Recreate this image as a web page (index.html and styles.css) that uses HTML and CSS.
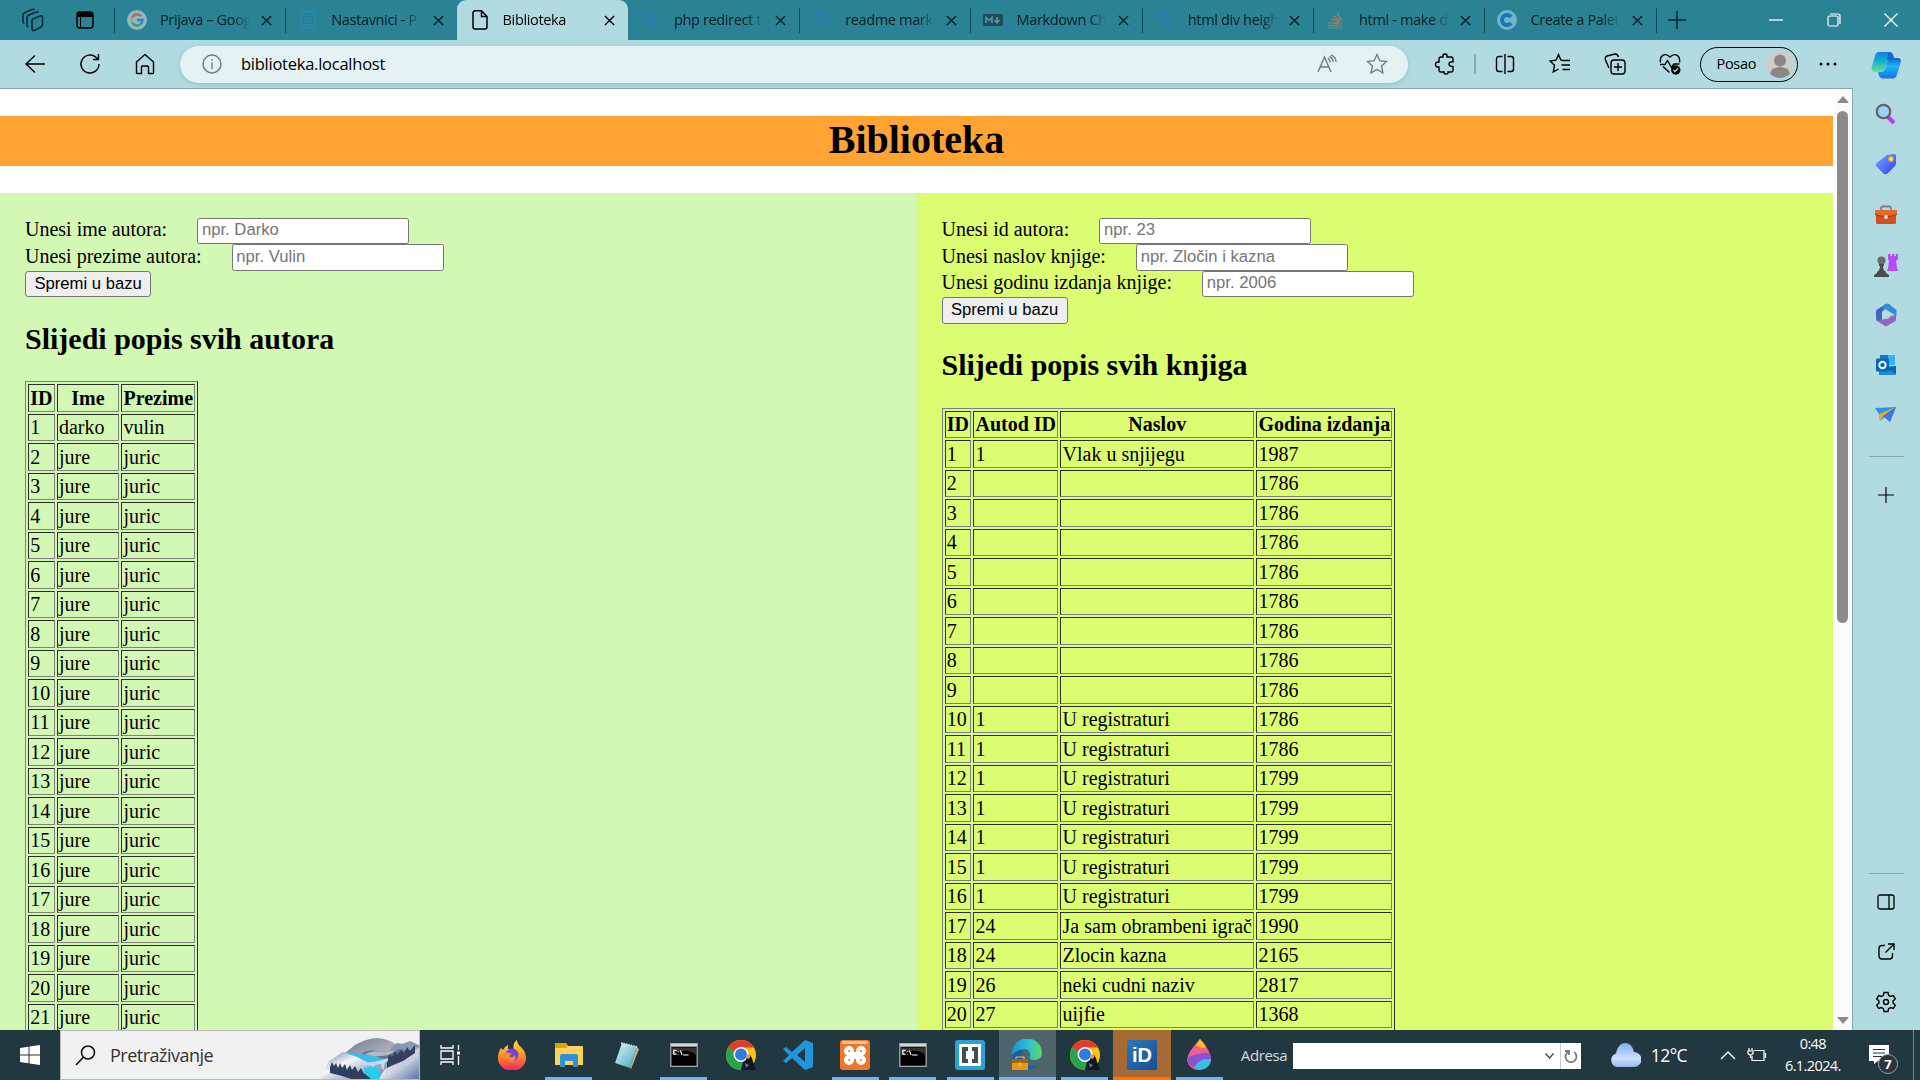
FILE: index.html
```html
<!DOCTYPE html>
<html lang="hr">
<head>
<meta charset="utf-8">
<title>Biblioteka</title>
<link rel="stylesheet" href="styles.css">
</head>
<body>
<svg class="defs" width="0" height="0">
  <defs>
    <linearGradient id="gFire" x1="0" y1="0" x2="0" y2="1"><stop offset="0" stop-color="#ffe03a"/><stop offset=".5" stop-color="#ff9025"/><stop offset="1" stop-color="#f0206a"/></linearGradient>
    <linearGradient id="gEdge" x1="0" y1="0" x2="1" y2="0"><stop offset="0" stop-color="#1b8fdc"/><stop offset=".6" stop-color="#2fc3cf"/><stop offset="1" stop-color="#5fdc5c"/></linearGradient>
    <linearGradient id="gCopA" x1="0" y1="0" x2="0" y2="1"><stop offset="0" stop-color="#0f7fe0"/><stop offset=".5" stop-color="#16b5d0"/><stop offset="1" stop-color="#6fe08a"/></linearGradient>
    <linearGradient id="gCopB" x1="0" y1="0" x2="0" y2="1"><stop offset="0" stop-color="#1560d0"/><stop offset=".4" stop-color="#21b5f2"/><stop offset="1" stop-color="#1671ea"/></linearGradient>
    <linearGradient id="gTag" x1="0" y1="0" x2="1" y2="1"><stop offset="0" stop-color="#7aa8ff"/><stop offset="1" stop-color="#2f3df0"/></linearGradient>
    <linearGradient id="gCloud" x1="0" y1="0" x2="0" y2="1"><stop offset="0" stop-color="#7db0f5"/><stop offset=".65" stop-color="#cfe0fb"/><stop offset="1" stop-color="#94b8ee"/></linearGradient>
    <linearGradient id="gRock" x1="0" y1="0" x2="1" y2="1"><stop offset="0" stop-color="#6c7690"/><stop offset=".5" stop-color="#b7b5c6"/><stop offset="1" stop-color="#4d5674"/></linearGradient>
    <linearGradient id="gSnow" x1="0" y1="0" x2="1" y2="1"><stop offset="0" stop-color="#5e7cab"/><stop offset=".4" stop-color="#f4f6fa"/><stop offset="1" stop-color="#5474a6"/></linearGradient>
    <linearGradient id="gNote" x1="0" y1="0" x2="1" y2="1"><stop offset="0" stop-color="#e4f7fa"/><stop offset="1" stop-color="#3fa3bd"/></linearGradient>
    <symbol id="x" viewBox="0 0 12 12"><path d="M1 1l10 10M11 1L1 11" fill="none" stroke="currentColor" stroke-width="1.5"/></symbol>
    <symbol id="lens" viewBox="0 0 20 20"><circle cx="8" cy="8" r="5" fill="none" stroke="#1f7fb8" stroke-width="2.2"/><path d="M12 12l5 5" stroke="#1f7fb8" stroke-width="2.4"/></symbol>
    <symbol id="cmd" viewBox="0 0 30 26"><rect x=".7" y=".7" width="28.6" height="24.6" fill="#000" stroke="#a5a9ab" stroke-width="1.4"/><path d="M1 1h28v3H1z" fill="#d5d8da"/><path d="M2 13C10 7 22 7 28 13V5H2z" fill="#333"/><path d="M7 8H4v4h3M9 9v1M9 12v.5M11 8l2 5M14 13h6" stroke="#fff" fill="none" stroke-width="1.3"/></symbol>
    <symbol id="chrome" viewBox="0 0 32 32"><circle cx="16" cy="16" r="15" fill="#fbc116"/><path d="M16 16L3 8.500A15 15 0 0 1 29 8.500H16z" fill="#e33b2e"/><path d="M3 8.500A15 15 0 0 0 16 31l6.500-11.300L16 16z" fill="#2ba24c"/><circle cx="16" cy="15.500" r="7.500" fill="#fff"/><circle cx="16" cy="15.500" r="6" fill="#2f7de1"/><path d="M16 31l2-8 3-2 1-4 3-1 2 3 1 4 3 8z" fill="#151720"/><circle cx="23" cy="17.500" r="2.300" fill="#c89a82"/><path d="M20 24l4 2-3 3z" fill="#6973a0"/></symbol>
  </defs>
</svg>

<header class="tabbar">
  <div class="tab-tools">
    <svg width="22" height="24" viewBox="0 0 22 24" fill="none" stroke="#062c35" stroke-width="1.600"><path d="M11 11l7-3q2.500-1 2.500 1.500v7q0 1.800-1.500 2.500l-6 3.300q-3 1.200-3-1.800v-7.500q0-1.500 1-2z"/><path d="M6.500 19Q5 18.500 5 17V9.500q0-1.500 1.500-2.300L14 4q1.500-.5 2.500.5M2.500 15.500Q1 15 1 13.500V7q0-1.500 1.500-2.300L10 1.500q1.500-.5 2.500.5"/></svg>
    <svg width="18" height="18" viewBox="0 0 18 18"><rect x="1" y="1" width="16" height="16" rx="3" fill="none" stroke="#000" stroke-width="1.500"/><path d="M1 1h16v5H1z"/><path d="M4.500 6v10" stroke="#000"/></svg>
  </div>
  <nav class="tabs">
    <div class="tab"><svg class="fav" viewBox="0 0 20 20"><circle cx="10" cy="10" r="10" fill="#8fb9c2"/><path d="M14 6a5.500 5.500 0 0 0-9 2" stroke="#b5686c" stroke-width="2.500" fill="none"/><path d="M5 7.500a6 6 0 0 0 0 5" stroke="#b6a463" stroke-width="2.500" fill="none"/><path d="M5 12.500a5.500 5.500 0 0 0 8 2" stroke="#3f9a74" stroke-width="2.500" fill="none"/><path d="M10 10h5.500q0 3-2 4.500" stroke="#3f7fc0" stroke-width="2.500" fill="none"/></svg><span>Prijava – Goog</span><svg class="x"><use href="#x"/></svg></div>
    <div class="tab"><svg class="fav" viewBox="0 0 20 20"><path d="M3 1h14v15H3zM1 17h18v2H1z" fill="#2589a9"/><path d="M4 4h12M4 7h12M4 10h12M4 13h12" stroke="#2b718b"/></svg><span>Nastavnici - P</span><svg class="x"><use href="#x"/></svg></div>
    <div class="tab active"><svg class="fav" viewBox="0 0 20 20" fill="none" stroke="#000" stroke-width="1.500"><path d="M4 .8h7.500L17 6.500V17q0 2-2 2H5q-2 0-2-2V3q0-2 2-2M11.500 1v5.500H17"/></svg><span>Biblioteka</span><svg class="x"><use href="#x"/></svg></div>
    <div class="tab"><svg class="fav" viewBox="0 0 20 20"><use href="#lens"/></svg><span>php redirect t</span><svg class="x"><use href="#x"/></svg></div>
    <div class="tab"><svg class="fav" viewBox="0 0 20 20"><use href="#lens"/></svg><span>readme markd</span><svg class="x"><use href="#x"/></svg></div>
    <div class="tab"><svg class="fav" viewBox="0 0 20 20"><rect y="4" width="20" height="12" rx="1" fill="#1f4c58"/><path d="M3 13V7.500l3 3 3-3V13M14 7v5M11.500 10l2.500 3 2.500-3" stroke="#4f97a6" stroke-width="1.700" fill="none"/></svg><span>Markdown Ch</span><svg class="x"><use href="#x"/></svg></div>
    <div class="tab"><svg class="fav" viewBox="0 0 20 20"><use href="#lens"/></svg><span>html div heigh</span><svg class="x"><use href="#x"/></svg></div>
    <div class="tab"><svg class="fav" viewBox="0 0 20 20" fill="none"><path d="M3 12v6h12v-6" stroke="#588b8e" stroke-width="1.500"/><path d="M5 15.500h8M5 12.500l8 1M6 9l7 3M8 6l6 5M11 3l4 7" stroke="#a07f58" stroke-width="1.500"/></svg><span>html - make d</span><svg class="x"><use href="#x"/></svg></div>
    <div class="tab"><svg class="fav" viewBox="0 0 20 20"><circle cx="10" cy="10" r="10" fill="#75b5c6"/><path d="M14 7a5 5 0 1 0 0 6" stroke="#1478bd" stroke-width="4" fill="none"/></svg><span>Create a Palet</span><svg class="x"><use href="#x"/></svg></div>
  </nav>
  <div class="newtab"><svg width="18" height="18" viewBox="0 0 18 18"><path d="M9 0v18M0 9h18" stroke="#04262d" stroke-width="1.500"/></svg></div>
  <div class="win">
    <svg width="14" height="14" viewBox="0 0 14 14"><path d="M0 7h14" stroke="#fff" stroke-width="1.300"/></svg>
    <svg width="14" height="14" viewBox="0 0 14 14" fill="none" stroke="#fff" stroke-width="1.200"><rect x="1" y="3" width="10" height="10" rx="1.500"/><path d="M3 1h8q2 0 2 2v8"/></svg>
    <svg width="14" height="14" viewBox="0 0 14 14"><path d="M.5.5l13 13M13.500.5l-13 13" stroke="#fff" stroke-width="1.300"/></svg>
  </div>
</header>

<div class="browser">
  <div class="main">
    <div class="toolbar">
      <div class="tb"><svg width="22" height="20" viewBox="0 0 22 20"><path d="M11 1.500L2 10l9 8.500M2 10h19"/></svg></div>
      <div class="tb"><svg width="22" height="22" viewBox="0 0 22 22"><path d="M20 11a9 9 0 1 1-3-6.700L19.500 6.500M19.500 1v5.500H14"/></svg></div>
      <div class="tb"><svg width="20" height="22" viewBox="0 0 20 22"><path d="M1.500 9L10 1.500 18.500 9v10.500q0 1-1 1h-4V14q0-1-1-1h-5q-1 0-1 1v6.500h-4q-1 0-1-1z"/></svg></div>
      <div class="address">
        <svg width="20" height="20" viewBox="0 0 20 20"><circle cx="10" cy="10" r="9"/><path d="M10 8.500V15M10 5v1.800"/></svg>
        <span>biblioteka.localhost</span>
        <svg width="20" height="20" viewBox="0 0 20 20"><path d="M1 18L7.500 3 14 18M3.500 13h8M11 4q2 1.500 2 4.500M12.500 2.500q3.500 1.500 3.500 5.500M14 .8q5 2 5 7"/></svg>
        <svg class="star" width="22" height="22" viewBox="0 0 22 22"><path d="M11 1.500l2.900 6.200 6.600.8-4.900 4.600 1.300 6.700L11 16.500l-5.900 3.300 1.300-6.700L1.500 8.500l6.600-.8z"/></svg>
      </div>
      <div class="tb"><svg width="22" height="22" viewBox="0 0 22 22"><path d="M7 4h2q-.5-3 2-3t2 3h4q2 0 2 2v3q-4-.5-4 2t4 2.500V17q0 2-2 2h-3q.5 2-2 2t-2-2H7q-2 0-2-2v-3q-3.500.5-3.500-2.500T5 9V6q0-2 2-2z"/></svg></div>
      <i class="tb-sep"></i>
      <div class="tb"><svg width="20" height="22" viewBox="0 0 20 22"><path d="M7.500 3.500H4q-2.500 0-2.500 2.500v10q0 2.500 2.500 2.500h3.500M12.500 3.500H16q2.500 0 2.500 2.500v10q0 2.500-2.500 2.500h-3.500M10 1v20"/></svg></div>
      <div class="tb"><svg width="22" height="22" viewBox="0 0 22 22"><path d="M14 7.500l-2-.3L9.500 1.500 7 7.200l-6 .8 4.500 4.200L4.300 19l5.200-3M14 7.500h7M12.500 12H21M13.500 16.500H21"/></svg></div>
      <div class="tb"><svg width="22" height="22" viewBox="0 0 22 22"><rect x="7" y="7" width="14" height="14" rx="3"/><path d="M14 10v8M10 14h8M5 15L1.300 6.500Q.8 4 3 3l8-2q2.500-.3 3.500 3"/></svg></div>
      <div class="tb"><svg width="22" height="22" viewBox="0 0 22 22"><path d="M1.600 9.500C0 3 6-1 11 4 16-1 22 3 20.400 9.500M1 11.500h5l2.500-4 4 7 2.500-3.500h5.500M4 13.500l6.500 6"/><circle cx="16.800" cy="17" r="4.700" fill="#000" stroke="none"/><path d="M14.500 17l1.500 1.500 3-3" stroke="#b2dae1"/></svg></div>
      <div class="profile"><span>Posao</span><svg width="28" height="28" viewBox="0 0 28 28"><circle cx="14" cy="14" r="13.800" fill="#d0cecb"/><circle cx="14" cy="10.500" r="6" fill="#8a8886"/><path d="M4 24q1-7 10-7t10 7q-10 8-20 0z" fill="#8a8886"/></svg></div>
      <div class="tb more"><svg width="18" height="4" viewBox="0 0 18 4" fill="#000"><circle cx="2" cy="2" r="1.500" fill="#000"/><circle cx="9" cy="2" r="1.500" fill="#000"/><circle cx="16" cy="2" r="1.500" fill="#000"/></svg></div>
    </div>
    <div class="viewport">
      <div class="page">
        <h1>Biblioteka</h1>
        <div class="cols">
          <section class="authors">
            <form>
              <div class="row"><label>Unesi ime autora:</label><input type="text" placeholder="npr. Darko"></div>
              <div class="row"><label>Unesi prezime autora:</label><input type="text" placeholder="npr. Vulin"></div>
              <div class="row"><button type="button">Spremi u bazu</button></div>
            </form>
            <h2>Slijedi popis svih autora</h2>
            <table border="1">
              <tr><th>ID</th><th class="c-ime">Ime</th><th>Prezime</th></tr>
              <tr><td>1</td><td>darko</td><td>vulin</td></tr>
              <tr><td>2</td><td>jure</td><td>juric</td></tr>
              <tr><td>3</td><td>jure</td><td>juric</td></tr>
              <tr><td>4</td><td>jure</td><td>juric</td></tr>
              <tr><td>5</td><td>jure</td><td>juric</td></tr>
              <tr><td>6</td><td>jure</td><td>juric</td></tr>
              <tr><td>7</td><td>jure</td><td>juric</td></tr>
              <tr><td>8</td><td>jure</td><td>juric</td></tr>
              <tr><td>9</td><td>jure</td><td>juric</td></tr>
              <tr><td>10</td><td>jure</td><td>juric</td></tr>
              <tr><td>11</td><td>jure</td><td>juric</td></tr>
              <tr><td>12</td><td>jure</td><td>juric</td></tr>
              <tr><td>13</td><td>jure</td><td>juric</td></tr>
              <tr><td>14</td><td>jure</td><td>juric</td></tr>
              <tr><td>15</td><td>jure</td><td>juric</td></tr>
              <tr><td>16</td><td>jure</td><td>juric</td></tr>
              <tr><td>17</td><td>jure</td><td>juric</td></tr>
              <tr><td>18</td><td>jure</td><td>juric</td></tr>
              <tr><td>19</td><td>jure</td><td>juric</td></tr>
              <tr><td>20</td><td>jure</td><td>juric</td></tr>
              <tr><td>21</td><td>jure</td><td>juric</td></tr>
            </table>
          </section>
          <section class="books">
            <form>
              <div class="row"><label>Unesi id autora:</label><input type="text" placeholder="npr. 23"></div>
              <div class="row"><label>Unesi naslov knjige:</label><input type="text" placeholder="npr. Zločin i kazna"></div>
              <div class="row"><label>Unesi godinu izdanja knjige:</label><input type="text" placeholder="npr. 2006"></div>
              <div class="row"><button type="button">Spremi u bazu</button></div>
            </form>
            <h2>Slijedi popis svih knjiga</h2>
            <table border="1">
              <tr><th>ID</th><th>Autod ID</th><th>Naslov</th><th>Godina izdanja</th></tr>
              <tr><td>1</td><td>1</td><td>Vlak u snjijegu</td><td>1987</td></tr>
              <tr><td>2</td><td></td><td></td><td>1786</td></tr>
              <tr><td>3</td><td></td><td></td><td>1786</td></tr>
              <tr><td>4</td><td></td><td></td><td>1786</td></tr>
              <tr><td>5</td><td></td><td></td><td>1786</td></tr>
              <tr><td>6</td><td></td><td></td><td>1786</td></tr>
              <tr><td>7</td><td></td><td></td><td>1786</td></tr>
              <tr><td>8</td><td></td><td></td><td>1786</td></tr>
              <tr><td>9</td><td></td><td></td><td>1786</td></tr>
              <tr><td>10</td><td>1</td><td>U registraturi</td><td>1786</td></tr>
              <tr><td>11</td><td>1</td><td>U registraturi</td><td>1786</td></tr>
              <tr><td>12</td><td>1</td><td>U registraturi</td><td>1799</td></tr>
              <tr><td>13</td><td>1</td><td>U registraturi</td><td>1799</td></tr>
              <tr><td>14</td><td>1</td><td>U registraturi</td><td>1799</td></tr>
              <tr><td>15</td><td>1</td><td>U registraturi</td><td>1799</td></tr>
              <tr><td>16</td><td>1</td><td>U registraturi</td><td>1799</td></tr>
              <tr><td>17</td><td>24</td><td>Ja sam obrambeni igrač</td><td>1990</td></tr>
              <tr><td>18</td><td>24</td><td>Zlocin kazna</td><td>2165</td></tr>
              <tr><td>19</td><td>26</td><td>neki cudni naziv</td><td>2817</td></tr>
              <tr><td>20</td><td>27</td><td>uijfie</td><td>1368</td></tr>
              <tr><td></td><td></td><td></td><td></td></tr>
            </table>
          </section>
        </div>
      </div>
      <div class="scroll">
        <svg width="12" height="7" viewBox="0 0 12 7"><path d="M6 0l6 7H0z" fill="#8b8b8b"/></svg>
        <i class="thumb"></i>
        <svg class="down" width="12" height="7" viewBox="0 0 12 7"><path d="M6 7l6-7H0z" fill="#8b8b8b"/></svg>
      </div>
    </div>
  </div>
  <aside class="side">
    <div class="si"><svg width="30" height="28" viewBox="0 0 30 28"><path d="M8 1h10q3 0 4 3l1.500 5H17l-3.500 9q-1 3-4 3H3Q-.5 20 1 15L4 5q1-4 4-4z" fill="url(#gCopA)"/><path d="M17 1h1q3 0 4 3l1.500 5H16z" fill="#1467d2"/><path d="M22 27.500H12q-3 0-4-3L7 21h3q3 0 4-3l2.500-8q1-3 4-3H27q4 0 2.500 5L26 23.500q-1 4-4 4z" fill="url(#gCopB)"/></svg></div>
    <div class="si"><svg width="22" height="22" viewBox="0 0 22 22"><path d="M13 14l6 6" stroke="#c835f5" stroke-width="4"/><circle cx="8.500" cy="8.500" r="6.700" fill="#95d4f0" stroke="#626468" stroke-width="2.300"/></svg></div>
    <div class="si"><svg width="22" height="22" viewBox="0 0 22 22"><path d="M12 2l7-1q2 0 2 2v7q0 2-1.500 3.500l-7 7q-2 1.500-4 0l-7-7q-1.500-2 0-3.500z" fill="url(#gTag)"/><circle cx="16" cy="6" r="2.300" fill="#ffe98a" stroke="#e3ad16" stroke-width="1.300"/></svg></div>
    <div class="si"><svg width="24" height="20" viewBox="0 0 24 20"><path d="M7 6V3q0-1.500 1.500-1.500h7Q17 1.500 17 3v3" fill="none" stroke="#7d8487" stroke-width="1.800"/><rect x="2" y="7" width="20" height="12" rx="1.500" fill="#d2501d"/><path d="M1 5h22v5q-11 3-22 0z" fill="#e8692a"/><path d="M1 9.500q11 4 22 0" stroke="#9b3410" fill="none"/><circle cx="12" cy="12" r="2" fill="#d8d8d8"/></svg></div>
    <div class="si"><svg width="24" height="24" viewBox="0 0 24 24"><path d="M14 1h2.500v2H18V1h2.500v2H22V1h2v5l-2 2 1 7 1 3H13l1-3 1-7-1-2z" fill="#b64df5"/><circle cx="7.500" cy="7.500" r="4" fill="#6b6b6b"/><path d="M5 11h5v2h-1q0 4 3 6v1l3 2v2H0v-2l3-2v-1q3-2 3-6H5z" fill="#4d4d4d"/></svg></div>
    <div class="si"><svg width="22" height="24" viewBox="0 0 22 24"><path d="M11 1L2 6.500q-1 .7-1 2v7q0 1.500 1 2.500l5 1V9l8-8z" fill="#4564c8"/><path d="M10 1l3-.5 8 6q.5 1 .5 2V13L15 9l-8-5z" fill="#348ed4"/><path d="M21 11.500v5q0 1-1 1.700L12 23q-1 .5-2 0l-8-5q-1-1-1-2.500 3 3 6 1.500l8-3.500z" fill="#9266c4"/><circle cx="11" cy="12" r="4" fill="#b2dae1"/></svg></div>
    <div class="si"><svg width="22" height="22" viewBox="0 0 22 22"><path d="M5 1h15v10H5z" fill="#32b6ec"/><path d="M5 1h8v5H5z" fill="#1779c4"/><path d="M4 12h17v8q0 1-1 1H4z" fill="#1b8ad8"/><path d="M21 12v8L11 14z" fill="#1266ab"/><rect x="1" y="4.500" width="13" height="13" rx="1.200" fill="#0868bd"/><circle cx="7.500" cy="11" r="3.200" fill="none" stroke="#fff" stroke-width="1.900"/></svg></div>
    <div class="si"><svg width="24" height="18" viewBox="0 0 24 18"><path d="M1 2l21-1-6 15-5-5-5 4-1-7z" fill="#2b94ea"/><path d="M22 1L5 8l1 7 3-5z" fill="#f5a81c"/><path d="M22 1L9 10l7 6z" fill="#3a79df"/></svg></div>
    <i class="rule"></i>
    <div class="si plus"><svg width="16" height="16" viewBox="0 0 16 16"><path d="M8 0v16M0 8h16" stroke="#000" stroke-width="1.200"/></svg></div>
    <div class="bottom">
      <i class="rule"></i>
      <div class="si"><svg width="18" height="16" viewBox="0 0 18 16" fill="none" stroke="#000" stroke-width="1.300"><rect x="1" y="1" width="16" height="14" rx="2"/><path d="M12 1v14"/></svg></div>
      <div class="si"><svg width="17" height="17" viewBox="0 0 17 17" fill="none" stroke="#000" stroke-width="1.400"><path d="M7 2.500H4q-3 0-3 3V13q0 3 3 3h7.500q3 0 3-3v-3M7.500 9.500L16 1M10 1h6v6"/></svg></div>
      <div class="si"><svg width="22" height="22" viewBox="0 0 22 22" fill="none" stroke="#000" stroke-width="1.400"><path d="M9 1.500h4l.6 2.800 2 1.100 2.700-.9 2 3.400-2.200 2v2.200l2.200 2-2 3.400-2.700-.9-2 1.100-.6 2.800H9l-.6-2.800-2-1.100-2.700.9-2-3.400 2.200-2V9.900l-2.200-2 2-3.400 2.700.9 2-1.100z"/><circle cx="11" cy="11" r="2.500"/></svg></div>
    </div>
  </aside>
</div>

<footer class="taskbar">
  <div class="start"><svg width="20" height="20" viewBox="0 0 20 20" fill="#fff"><path d="M0 3l8.500-1.200v7.700H0zM9.500 1.600L20 0v9.500H9.500zM0 10.500h8.500v7.700L0 17zM9.500 10.500H20V20L9.500 18.400z"/></svg></div>
  <div class="search">
    <svg class="sicon" width="21" height="21" viewBox="0 0 21 21" fill="none" stroke="#111" stroke-width="1.600"><circle cx="13" cy="7.500" r="6.500"/><path d="M8.500 12L1 20"/></svg>
    <span>Pretraživanje</span>
    <svg class="art" width="98" height="41" viewBox="0 0 98 41">
      <path d="M24 15l10-8q10-6 22-7 12 1 20 7l12-3 10 4v33H22z" fill="url(#gRock)"/>
      <path d="M70 9l6-4 6 1 7-3 9 4v34H66z" fill="#8797b4"/>
      <path d="M40 16q8-6 20-2l20-3 8 3-16 10-22-2z" fill="#666f8b"/>
      <path d="M44 16q8-4 16-2 10-1 16-2l-8 5-16 2z" fill="#b5b8c8"/>
      <path d="M26 14l22 3 16 4 3 5-14 2-24-6z" fill="#35bfe8"/>
      <path d="M0 41l8-18 14-9 14 5 16 8 8 14z" fill="url(#gSnow)"/>
      <path d="M58 41q4-10 16-17l24-14v31z" fill="url(#gSnow)"/>
      <path d="M98 9v10l-12 8-16 5-6 5 2-9z" fill="#c4cfdf" opacity=".7"/>
      <path d="M9 29l2-5 2 4 2-3 2 5 2-5 2 5 3-4 2 6 3-5 2 5 3-4 3 6 3-4 3 6 3-3 3 6v6l-12-2-16-5-12-3z" fill="#2f3d5f"/>
      <path d="M66 21l3-5 2 3 3-6 2 4 4-5 3 3 3-6 3 4 5-6v8l-12 8-12 5-4 2z" fill="#33415f"/>
      <path d="M38 25q16 0 29-5v3l-3 2-2 8-2-7-6 1-2 4-2-4-10 0z" fill="#c9d8ee"/>
      <path d="M43 30q8-3 14 0l3 6-2 5H50l-6-5z" fill="#25cdee"/>
    </svg>
  </div>
  <div class="taskview"><svg width="20" height="20" viewBox="0 0 20 20" fill="none" stroke="#fff" stroke-width="1.300"><path d="M1 0v3h12V0M1 20v-3h12v3M1 6h12v8H1zM18.500 0v5M18.500 11v9"/><path d="M17 6.500h3v3h-3z" fill="#fff" stroke="none"/></svg></div>
  <div class="apps">
    <div class="app"><svg width="30" height="30" viewBox="0 0 30 30"><path d="M4 8l2 2q2-4 5-5v4q4 0 6 1-2-6 3-10 0 4 4 7 5 5 5 11A14 13 0 0 1 1 18Q1 12 4 8z" fill="url(#gFire)"/><circle cx="15" cy="15" r="6.500" fill="#7542d8"/><path d="M7 14q4-3 8 0-3 1-2 3 3 1 5-2 2 7-5 7-6-1-6-8z" fill="#ff8a22"/></svg></div>
    <div class="app run"><svg width="30" height="26" viewBox="0 0 30 26"><path d="M1 2q0-1 1-1h10l2 3h14q1 0 1 1v18H1z" fill="#ffd35a"/><path d="M1 1h11l2 3-2 2H1z" fill="#e0a10f"/><path d="M6 25V14q0-2 2-2h14q2 0 2 2v11h-5v-6h-8v6z" fill="#2f8fd8"/></svg></div>
    <div class="app"><svg width="30" height="30" viewBox="0 0 30 30"><path d="M11 3l15 4-7 21-15-5z" fill="url(#gNote)"/><path d="M26 7l2 2-8 20-1-1z" fill="#c8b087"/><path d="M10 3l16 4" stroke="#ddd" stroke-width="2" stroke-dasharray="1.500 1"/></svg></div>
    <div class="app run"><svg width="28" height="24"><use href="#cmd"/></svg></div>
    <div class="app"><svg width="32" height="32"><use href="#chrome"/></svg></div>
    <div class="app"><svg width="30" height="30" viewBox="0 0 30 30"><path d="M22 0l8 3v24l-8 3L9 18l-6 5-3-2 6-6-6-6 3-2 6 5zM22 8l-8 7 8 7z" fill="#2196dc" fill-rule="evenodd"/></svg></div>
    <div class="app run"><svg width="30" height="30" viewBox="0 0 30 30"><rect width="30" height="30" rx="3" fill="#f0762a"/><path d="M2 1h26v3H2z" fill="#f9c09a"/><path d="M9 11l12 9M21 11L9 20" fill="none" stroke="#fff" stroke-width="5"/><g fill="#f0762a" stroke="#fff" stroke-width="4"><circle cx="9" cy="11" r="3"/><circle cx="21" cy="11" r="3"/><circle cx="9" cy="20" r="3"/><circle cx="21" cy="20" r="3"/></g></svg></div>
    <div class="app run"><svg width="28" height="24"><use href="#cmd"/></svg></div>
    <div class="app run"><svg width="30" height="30" viewBox="0 0 30 30"><rect width="30" height="30" rx="3" fill="#2da2da"/><rect x="4" y="4" width="22" height="22" rx="1" fill="#fff"/><path d="M13 7H7v16h6v-4h-2v-8h2zM17 7h6v16h-6v-4h2v-8h-2z" fill="#474c50"/></svg></div>
    <div class="app run current"><svg width="32" height="32" viewBox="0 0 32 32"><path d="M1 16A15 15 0 0 1 31 13q0 8-8 8-5 0-4-3 1-7-5-8-8 0-13 6z" fill="url(#gEdge)"/><path d="M1 17q4-7 11-5-4 12 8 15 5 1 8-2Q21 33 12 30 1 27 1 17z" fill="#155fa8"/><path d="M1 20h16v11H1z" fill="#e89518"/><path d="M1 20h16v4H1z" fill="#a96209"/><path d="M5 20v-2h8v2M8 24h2v3H8z" fill="none" stroke="#f8c855"/></svg></div>
    <div class="app run"><svg width="32" height="32"><use href="#chrome"/></svg></div>
    <div class="app run alert"><div class="id-logo">iD</div></div>
    <div class="app run"><svg width="24" height="32" viewBox="0 0 24 32"><path d="M13 0q11 12 11 20a12 11 0 0 1-24 0Q1 13 13 0z" fill="#ef5f8f"/><path d="M13 0q4 4 6 8-5 3-10-2z" fill="#ffbc27"/><path d="M0 19q10-5 22-5 3 6 2 8-8-5-17 6Q1 26 0 19z" fill="#8951d6"/><path d="M7 29q4-10 17-9-1 11-13 11z" fill="#35bfe4"/></svg></div>
  </div>
  <label class="addr-label">Adresa</label>
  <div class="addr-box">
    <svg width="9" height="6" viewBox="0 0 9 6"><path d="M.5.5l4 4.500 4-4.500" fill="none" stroke="#444" stroke-width="1.300"/></svg>
    <div class="go"><svg width="14" height="15" viewBox="0 0 14 15"><path d="M10 3a5.500 5.500 0 1 1-6 0M1 2h4v4" fill="none" stroke="#777" stroke-width="1.800"/></svg></div>
  </div>
  <div class="weather"><svg width="31" height="24" viewBox="0 0 31 24"><path d="M7 24a7 7 0 0 1-1-13.500Q8 0 15 0t9 9a7.500 7.500 0 0 1 0 15z" fill="url(#gCloud)"/></svg><span>12°C</span></div>
  <div class="tray">
    <svg width="16" height="9" viewBox="0 0 16 9"><path d="M1 8l7-7 7 7" fill="none" stroke="#fff" stroke-width="1.400"/></svg>
    <svg width="20" height="14" viewBox="0 0 20 14" fill="none" stroke="#fff" stroke-width="1.200"><path d="M7 2.500h10v10H5V8M18.500 5v5M1 3h5v2.500q-2.500 3-5 0zM2 0v3M5 0v3M3.500 7v3"/></svg>
  </div>
  <div class="clock"><span>0:48</span><span>6.1.2024.</span></div>
  <div class="notif"><svg width="20" height="20" viewBox="0 0 20 20"><path d="M0 0h20v16H9l-4 3v-3H0z" fill="#fff"/><path d="M4 4.500h12M4 8h12M4 11.500h12" stroke="#213840" stroke-width="1.200"/></svg><b>7</b></div>
</footer>
</body>
</html>
```
FILE: styles.css
```css
* { box-sizing: border-box; }
body {
  margin: 0; width: 1920px; height: 1080px; overflow: hidden;
  display: flex; flex-direction: column;
  font-family: "Open Sans", "Noto Sans", sans-serif; color: #000;
}
.defs { position: absolute; }
svg { display: block; flex: none; }

/* tab strip */
.tabbar { height: 40px; background: #2c8295; display: flex; align-items: center; flex: none; }
.tab-tools { width: 114px; padding-left: 22px; display: flex; gap: 32px; align-items: center; }
.tabs { display: flex; height: 40px; }
.tab {
  width: 171.300px; height: 40px; padding: 0 12px 0 13px; display: flex; align-items: center;
  font-size: 14.500px; letter-spacing: -.35px; color: #031d23;
  background: linear-gradient(#124956, #124956) left 8px / 1px 25px no-repeat;
}
.tab .fav { width: 20px; height: 20px; margin-right: 13px; }
.tab span {
  width: 96px; overflow: hidden; white-space: nowrap; line-height: 24px;
  -webkit-mask-image: linear-gradient(to right, #000 72px, transparent 91px);
}
.tab .x { width: 11px; height: 11px; margin: 1px 1px 0 auto; }
.tab.active { background: #b2dae1; border-radius: 9px 9px 0 0; color: #000; }
.tab.active + .tab { background: none; }
.newtab { height: 40px; width: 45px; padding-left: 12px; display: flex; align-items: center; background: linear-gradient(#124956, #124956) left 8px / 1px 25px no-repeat; }
.win { margin-left: auto; display: flex; gap: 43.500px; padding-right: 22px; }

/* browser frame */
.browser { flex: 1; min-height: 0; display: flex; background: #b2dae1; }
.main { width: 1853px; display: flex; flex-direction: column; }
.toolbar { height: 48px; flex: none; display: flex; align-items: center; padding-left: 7.500px; }
.toolbar svg { fill: none; stroke: #000; stroke-width: 1.400; }
.tb { width: 55px; display: flex; justify-content: center; flex: none; }
.tb-sep { width: 2px; height: 20px; background: #86a9b1; margin: 0 1.500px; flex: none; }
.address {
  width: 1228px; height: 37px; margin: 0 9.500px 0 7.500px; border-radius: 19px; background: #e4f2f4;
  box-shadow: 0 1px 4px rgba(60, 140, 155, .3);
  display: flex; align-items: center; padding: 0 20px 0 22px; flex: none;
}
.address svg { stroke: #6d7c80; }
.address span { margin: -2px auto 0 19px; font-size: 16.500px; letter-spacing: -.25px; }
.address .star { margin-left: 29px; }
.profile {
  width: 98px; height: 35px; margin: 0 3px 0 2px; border: 1.500px solid #000; border-radius: 18px; flex: none;
  display: flex; align-items: center; justify-content: space-between; padding: 0 3px 0 16px;
  font-size: 14.500px; letter-spacing: -.3px;
}
.profile span { margin-top: -1px; }
.profile svg, .more svg { stroke: none; }
.viewport { flex: 1; min-height: 0; display: flex; border-top: 1px solid #87a6ad; border-right: 1px solid #87a6ad; background: #fff; }

/* page content, shown at 125% */
.page {
  width: 1466.400px; height: 752.800px; zoom: 1.25; overflow: hidden; flex: none;
  font-family: "Liberation Serif", "Times New Roman", serif; font-size: 16px;
  display: flex; flex-direction: column;
}
.page h1 { font-size: 32px; height: 40px; line-height: 38.400px; margin: 21.600px 0; background: #ffa433; text-align: center; flex: none; }
.cols { display: grid; grid-template-columns: 1fr 1fr; }
.cols section { padding: 19.600px 20px 20px; }
.authors { background: #d3f8b4; }
.books { background: #dcfc72; }
.row { height: 21.200px; display: flex; align-items: center; }
.row label { margin-right: 24px; line-height: 18px; margin-top: -2.400px; }
.row input {
  width: 169.600px; height: 21.200px; padding: 0 2px 1px 3px; border: 1px solid #767676; border-radius: 2px; margin: 0;
  font: 13.333px "Liberation Sans", Arial, sans-serif; background: #fff;
}
.row input::placeholder { color: #757575; }
.row button {
  width: 101px; height: 21.200px; padding: 0; border: 1px solid #767676; border-radius: 2.500px; background: #efefef; color: #000;
  font: 13.333px "Liberation Sans", Arial, sans-serif; white-space: nowrap;
}
.page h2 { font-size: 24px; line-height: 27px; margin: 19.920px 0 20.300px; }
.page table { border: 1px outset #808080; border-spacing: 2px; }
.page th, .page td { padding: 1px; height: 22px; line-height: 18px; border: 1px inset #808080; }
.page .c-ime { width: 50px; }

.scroll { width: 19px; background: #fcfcfc; display: flex; flex-direction: column; align-items: center; padding: 7px 0 6px; }
.thumb { width: 11px; height: 512px; margin-top: 8px; background: #8b8b8b; border-radius: 6px; }
.scroll .down { margin-top: auto; }

/* right side bar */
.side { width: 67px; display: flex; flex-direction: column; align-items: center; padding-right: 1px; }
.si { height: 50.200px; display: flex; align-items: center; justify-content: center; flex: none; }
.side > .si:first-child { height: 49.200px; }
.rule { width: 35px; height: 1px; background: #86a9b1; margin-top: 15px; }
.plus { margin-top: 13px; }
.bottom { margin-top: auto; padding-bottom: 3px; display: flex; flex-direction: column; align-items: center; }
.bottom .rule { margin: 0 0 2px; }

/* taskbar */
.taskbar { height: 50px; flex: none; background: #213840; color: #fff; display: flex; align-items: center; }
.start { width: 60px; display: flex; justify-content: center; }
.search { width: 360px; height: 50px; background: #f1f1f1; border: 1px solid #b7babb; display: flex; align-items: center; padding-left: 14px; color: #333; }
.search span { margin: 0 auto 0 14px; font-size: 18px; letter-spacing: -.5px; }
.search .art { align-self: flex-end; }
.taskview { width: 59px; display: flex; justify-content: center; }
.apps { display: flex; margin-left: 4px; height: 50px; }
.app { width: 57.300px; display: flex; align-items: center; justify-content: center; }
.app.run { background: linear-gradient(#74b1f7, #74b1f7) center bottom / 47px 3px no-repeat; }
.app.current { background: linear-gradient(#74b1f7, #74b1f7) bottom / 100% 3px no-repeat, #50646b; }
.app.alert { background: linear-gradient(#ff7200, #ff7200) bottom / 100% 3px no-repeat, #a76a35; }
.id-logo { width: 30px; height: 30px; background: linear-gradient(135deg, #2878bd, #174f91); font: bold 20px/30px "Liberation Sans", sans-serif; text-align: center; }
.addr-label { width: 65px; padding-left: 13px; font-size: 15px; letter-spacing: -.4px; color: #d7dcde; line-height: 20px; margin-top: -1px; }
.addr-box { width: 288px; height: 26px; margin: 2px 0 0; background: #fff; display: flex; align-items: center; justify-content: flex-end; gap: 6px; }
.go { width: 21px; height: 26px; border-left: 1px solid #ccc; display: flex; align-items: center; justify-content: center; }
.weather { display: flex; align-items: center; gap: 10px; margin-left: 29px; font-size: 17.500px; letter-spacing: -.6px; width: 110px; }
.tray { display: flex; align-items: center; gap: 11px; width: 64px; }
.clock { width: 58px; display: flex; flex-direction: column; align-items: center; gap: 2px; font-size: 14.500px; line-height: 20px; letter-spacing: -.6px; }
.notif { position: relative; margin-left: 27px; padding-right: 24px; border-right: 1px solid #77868b; height: 50px; padding-top: 15px; }
.notif b {
  position: absolute; left: 9px; top: 24px; width: 20px; height: 20px; border-radius: 50%; border: 1px solid #999;
  background: #303338; font-size: 13px; line-height: 18px; text-align: center;
}
```
